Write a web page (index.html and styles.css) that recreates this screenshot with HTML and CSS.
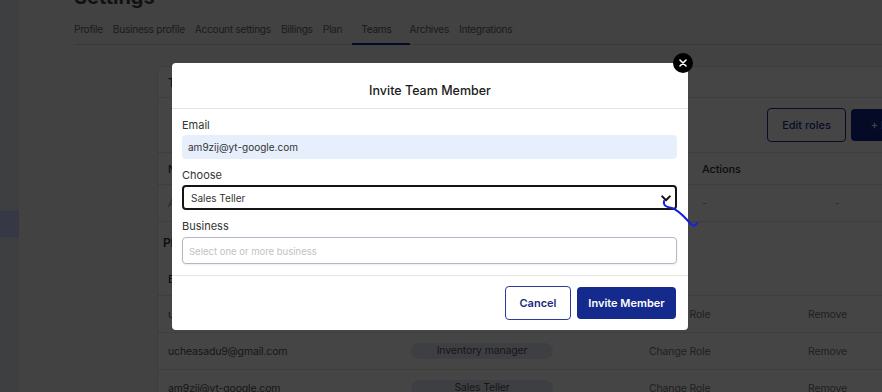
FILE: index.html
```html
<!DOCTYPE html>
<html lang="en">
<head>
    <meta charset="UTF-8">
    <meta name="viewport" content="width=device-width, initial-scale=1.0">
    <title>Settings - Teams</title>
    <link rel="stylesheet" href="styles.css">
</head>
<body>
    <div class="app">
        <aside class="sidebar">
            <div class="side-item active"></div>
        </aside>
        <main class="main">
            <h1 class="page-title">Settings</h1>
            <nav class="tabs">
                <a class="tab">Profile</a>
                <a class="tab">Business profile</a>
                <a class="tab">Account settings</a>
                <a class="tab">Billings</a>
                <a class="tab">Plan</a>
                <a class="tab active">Teams</a>
                <a class="tab">Archives</a>
                <a class="tab">Integrations</a>
            </nav>

            <section class="card">
                <div class="card-title">Team members</div>
                <div class="card-actions">
                    <button class="btn-outline">Edit roles</button>
                    <button class="btn-solid">+ Invite member</button>
                </div>
                <div class="members-row members-head">
                    <span>Name</span>
                    <span>Actions</span>
                    <span></span>
                </div>
                <div class="members-row">
                    <span class="muted">Admin</span>
                    <span class="dash">-</span>
                    <span class="dash">-</span>
                </div>

                <div class="section-title">PENDING INVITES</div>
                <div class="invite-row invite-head">
                    <span>Email</span>
                    <span>Role</span>
                    <span>Actions</span>
                    <span></span>
                </div>
                <div class="invite-row">
                    <span>ucheasadu9@gmail.com</span>
                    <span><span class="pill">Sales Teller</span></span>
                    <span class="link">Change Role</span>
                    <span class="link">Remove</span>
                </div>
                <div class="invite-row">
                    <span>ucheasadu9@gmail.com</span>
                    <span><span class="pill">Inventory manager</span></span>
                    <span class="link">Change Role</span>
                    <span class="link">Remove</span>
                </div>
                <div class="invite-row">
                    <span>am9zij@yt-google.com</span>
                    <span><span class="pill">Sales Teller</span></span>
                    <span class="link">Change Role</span>
                    <span class="link">Remove</span>
                </div>
            </section>
        </main>
    </div>

    <div class="overlay"></div>

    <div class="modal">
        <button class="close-btn" aria-label="Close">
            <svg width="8" height="8" viewBox="0 0 8 8">
                <path d="M1 1L7 7M7 1L1 7" stroke="#fff" stroke-width="1.6" stroke-linecap="round"/>
            </svg>
        </button>
        <div class="modal-header">Invite Team Member</div>
        <div class="modal-body">
            <div class="field">
                <label for="email">Email</label>
                <input type="text" id="email" class="input input-filled" value="am9zij@yt-google.com">
            </div>
            <div class="field">
                <label>Choose</label>
                <div class="select">
                    <span>Sales Teller</span>
                    <svg width="10" height="7" viewBox="0 0 10 7">
                        <path d="M1.2 1.4L5 5.2L8.8 1.4" fill="none" stroke="#111" stroke-width="2" stroke-linecap="round" stroke-linejoin="round"/>
                    </svg>
                </div>
            </div>
            <div class="field">
                <label for="business">Business</label>
                <input type="text" id="business" class="input input-outline" placeholder="Select one or more business">
            </div>
        </div>
        <div class="modal-footer">
            <button class="btn-cancel">Cancel</button>
            <button class="btn-invite">Invite Member</button>
        </div>
    </div>

    <!-- pen mark drawn on the screenshot -->
    <svg class="scribble" width="882" height="392" viewBox="0 0 882 392">
        <path d="M664 201 C663 206 667 207 672 208 C680 211 685 218 690 223 C692 226 695 227 697 223" fill="none" stroke="#1322e0" stroke-width="2" stroke-linecap="round"/>
    </svg>
</body>
</html>
```

FILE: styles.css
```css
* {
    box-sizing: border-box;
}
body {
    margin: 0;
    width: 882px;
    height: 392px;
    overflow: hidden;
    font-family: Inter, "Noto Sans", sans-serif;
    background-color: #f5f5f5;
    color: #555;
}
.app {
    display: flex;
    height: 392px;
}
.sidebar {
    width: 19px;
    flex-shrink: 0;
    background-color: #e6e8f0;
    padding-top: 211px;
}
.side-item {
    height: 26px;
}
.side-item.active {
    background-color: #c9d3ff;
}
.main {
    flex: 1;
    min-width: 0;
    padding-left: 55px;
}
.page-title {
    margin: -15px 0 0;
    font-size: 20px;
    line-height: 24px;
    font-weight: 700;
    color: #444;
}
.tabs {
    display: flex;
    margin-top: 11px;
    border-bottom: 1px solid #cfcfcf;
    font-size: 10.2px;
    letter-spacing: -0.3px;
}
.tab {
    padding: 3px 0 8px;
    margin-right: 10px;
    color: #666;
    border-bottom: 2px solid transparent;
    margin-bottom: -1px;
}
.tab.active {
    padding: 3px 18px 8px 9px;
    margin-right: 0;
    border-bottom-color: #142a8c;
    color: #555;
}
.card {
    width: 840px;
    margin: 21px 0 0 83px;
    background-color: white;
    border: 1px solid #dedede;
    border-radius: 6px 0 0 0;
    font-size: 10px;
    letter-spacing: -0.15px;
}
.card-title {
    height: 31px;
    padding: 0 10px;
    display: flex;
    align-items: center;
    font-weight: 600;
    font-size: 12px;
    color: #333;
    border-bottom: 1px solid #e4e4e4;
}
.card-actions {
    height: 55px;
    display: flex;
    justify-content: flex-end;
    align-items: center;
    gap: 5px;
    padding-right: 20px;
    border-bottom: 1px solid #e4e4e4;
}
.btn-outline {
    width: 79px;
    height: 34px;
    font-family: inherit;
    font-size: 11px;
    font-weight: 500;
    color: #1e2f8f;
    background: white;
    border: 1px solid #1e2f8f;
    border-radius: 4px;
}
.btn-solid {
    width: 125px;
    height: 32px;
    font-family: inherit;
    font-size: 11px;
    font-weight: 500;
    color: white;
    background-color: #142a8c;
    border: none;
    border-radius: 4px;
}
.members-row {
    display: grid;
    grid-template-columns: 534px 133px 1fr;
    align-items: center;
    height: 37px;
    padding-left: 10px;
    border-bottom: 1px solid #e4e4e4;
}
.members-head {
    height: 32px;
    font-size: 11px;
    font-weight: 500;
    color: #333;
}
.muted {
    font-style: italic;
    color: #888;
}
.dash {
    color: #999;
}
.section-title {
    height: 40px;
    display: flex;
    align-items: center;
    padding-left: 5px;
    font-weight: 600;
    font-size: 12px;
    color: #333;
}
.invite-row {
    display: grid;
    grid-template-columns: 243px 238px 159px 1fr;
    align-items: center;
    height: 37px;
    padding-left: 10px;
    border-bottom: 1px solid #e4e4e4;
    font-size: 10.5px;
    color: #555;
}
.invite-head {
    height: 34px;
    font-size: 11px;
    font-weight: 500;
    color: #333;
}
.pill {
    display: inline-block;
    width: 142px;
    height: 16px;
    line-height: 16px;
    text-align: center;
    border-radius: 8px;
    background-color: #e6e9f3;
    color: #555;
}
.link {
    color: #777;
}
.overlay {
    position: fixed;
    inset: 0;
    background-color: rgba(0, 0, 0, 0.73);
}

/* modal */
.modal {
    position: absolute;
    left: 172px;
    top: 63px;
    width: 516px;
    background-color: white;
    border-radius: 4px;
    font-size: 11px;
}
.close-btn {
    position: absolute;
    top: -10px;
    right: -5px;
    width: 20px;
    height: 20px;
    border-radius: 50%;
    border: none;
    padding: 0;
    background-color: #000;
    display: flex;
    justify-content: center;
    align-items: center;
}
.modal-header {
    height: 46px;
    display: flex;
    justify-content: center;
    align-items: center;
    padding-top: 9px;
    font-size: 12.5px;
    font-weight: 500;
    color: #1b1b1b;
    border-bottom: 1px solid #e3e3e3;
}
.modal-body {
    padding: 9px 11px 11px 10px;
    display: flex;
    flex-direction: column;
    gap: 9px;
}
.field label {
    display: block;
    line-height: 14px;
    margin-bottom: 3px;
    color: #333;
}
.input {
    width: 100%;
    font-family: inherit;
    font-size: 10px;
    border-radius: 4px;
    outline: none;
}
.input-filled {
    height: 24px;
    padding: 0 6px;
    border: none;
    background-color: #e8effc;
    color: #333;
}
.input-outline {
    height: 27px;
    margin-top: 1px;
    padding: 0 6px;
    border: 1px solid #b3b7c6;
    box-shadow: 0 1px 2px rgba(0, 0, 0, 0.08);
    background: white;
}
.input-outline::placeholder {
    color: #c2c2c2;
    font-size: 9.5px;
}
.select {
    height: 25px;
    display: flex;
    justify-content: space-between;
    align-items: center;
    padding: 0 4px 0 7px;
    border: 2px solid #141414;
    border-radius: 4px;
    font-size: 10px;
    color: #333;
}
.select svg {
    margin-top: 1px;
}
.modal-footer {
    display: flex;
    justify-content: flex-end;
    gap: 6px;
    padding: 10px 12px 10px;
    border-top: 1px solid #e6e6e6;
}
.btn-cancel {
    width: 66px;
    height: 34px;
    font-family: inherit;
    font-size: 11px;
    font-weight: 600;
    color: #1b2a80;
    background: white;
    border: 1px solid #2c3c9c;
    border-radius: 4px;
}
.btn-invite {
    width: 99px;
    height: 32px;
    margin-top: 1px;
    font-family: inherit;
    font-size: 11px;
    font-weight: 600;
    color: white;
    background-color: #142a8c;
    border: none;
    border-radius: 4px;
}
.scribble {
    position: absolute;
    left: 0;
    top: 0;
    pointer-events: none;
}
```
